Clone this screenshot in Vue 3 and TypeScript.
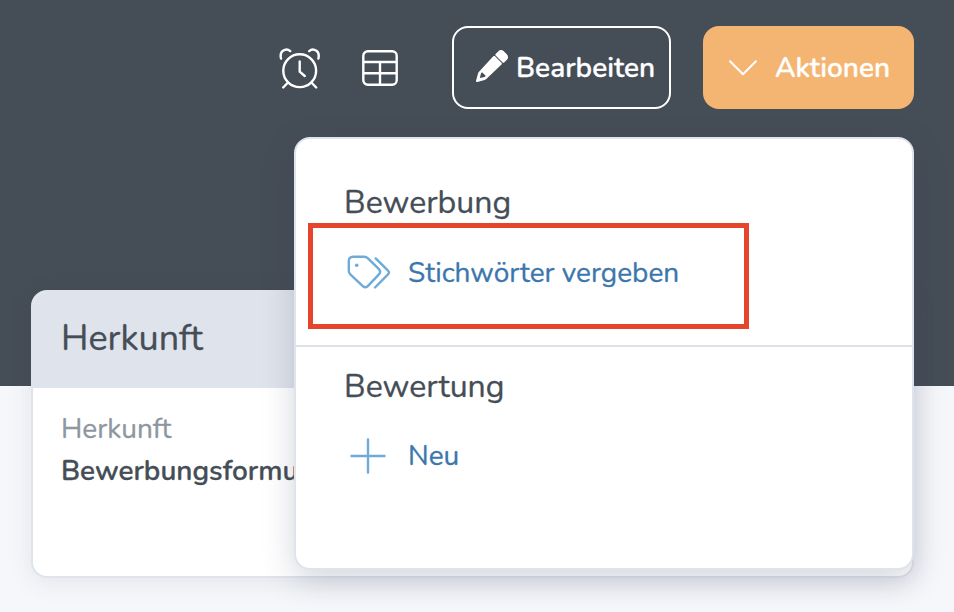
<script setup lang="ts">
import { ref } from 'vue'

interface MenuEntry {
  label: string
  icon: 'tags' | 'plus'
  highlighted: boolean
}
interface MenuSection {
  title: string
  entries: MenuEntry[]
}

const open = ref(true)
const sections: MenuSection[] = [
  { title: 'Bewerbung', entries: [{ label: 'Stichwörter vergeben', icon: 'tags', highlighted: true }] },
  { title: 'Bewertung', entries: [{ label: 'Neu', icon: 'plus', highlighted: false }] },
]
</script>

<template>
  <div class="page">
    <header class="hero">
      <div class="toolbar">
        <button class="icon-button clock" type="button" aria-label="Erinnerung">
          <svg width="42" height="44" viewBox="0 0 42 44" fill="none" stroke="#fff" stroke-width="2.4" stroke-linecap="round" stroke-linejoin="round">
            <circle cx="20.7" cy="23.7" r="16.4" />
            <path d="M20.7 14.5v10.2l5 4.3M9 35.5l-4.8 5M32.4 35.5l4.8 5M2 11.6C1.2 8 1.8 5.3 4 3.8c2.5-1.7 5.2-1.5 7.2.3M39.4 11.6c.8-3.6.2-6.3-2-7.8-2.5-1.7-5.2-1.5-7.2.3" />
          </svg>
        </button>
        <button class="icon-button" type="button" aria-label="Tabelle">
          <svg width="36" height="36" viewBox="0 0 36 36" fill="none" stroke="#fff" stroke-width="2.4">
            <rect x="1.3" y="1.3" width="33.4" height="33.4" rx="4.5" />
            <path d="M1.3 12h33.4M1.3 23.2h33.4M18 12v22.7" />
          </svg>
        </button>
        <button class="button outline" type="button">
          <svg class="pencil" width="32" height="32" viewBox="0 0 32 32" fill="#fff">
            <path fill-rule="evenodd" d="M17.3 6.3c.5-.5 1.2-.5 1.7 0l6.5 6.5c.5.5.5 1.2 0 1.7L10.3 29.1c-.5.5-1 .8-1.6.9L1.3 32c-.9.2-1.5-.4-1.3-1.3l2-7.3c.2-.7.5-1.2 1-1.7zM5 23.5l-1.2 4.6 4.7-1.2c1-.3 1.3-.9.7-1.6l-2.4-2.4c-.8-.7-1.5-.4-1.8.6z" />
            <path d="M19.6 4.1l2.6-2.7c1.5-1.7 4-1.7 5.6-.1l3 3c1.6 1.6 1.6 4 .1 5.5L28.2 12.4c-.5.5-1.1.5-1.6 0l-7-6.8c-.4-.5-.4-1 0-1.5z" />
          </svg>
          <span>Bearbeiten</span>
        </button>
        <div class="actions">
          <button class="button primary" type="button" @click="open = !open">
            <svg width="30" height="17" viewBox="0 0 30 17" fill="none" stroke="#fff" stroke-width="2" stroke-linecap="round" stroke-linejoin="round">
              <path d="M2 2.3l13 13 13-13" />
            </svg>
            <span>Aktionen</span>
          </button>
          <div v-if="open" class="menu">
            <section v-for="section in sections" :key="section.title" class="section">
              <h3 class="section-title">{{ section.title }}</h3>
              <a v-for="entry in section.entries" :key="entry.label" class="entry">
                <svg v-if="entry.icon === 'tags'" class="glyph" width="44" height="36" viewBox="0 0 44 36" fill="none" stroke="#6fabd9" stroke-width="2.4" stroke-linecap="round" stroke-linejoin="round">
                  <path d="M6 1.7h11c1.5 0 2.700.4 3.700 1.400l11 10.800c1.800 1.800 1.800 4 0 5.800L20.800 31.100c-1.500 1.500-3.500 1.500-5 0L3.300 19.300C2.300 18.400 1.800 17.500 1.800 16V5.900c0-2.500 1.700-4.200 4.200-4.200z" />
                  <path d="M28.700 3.400l12.300 12.200c1.300 1.300 1.300 2.500 0 3.800L28 32.500" />
                  <circle cx="9.700" cy="10.300" r="1.800" fill="#6fabd9" stroke="none" />
                </svg>
                <svg v-else class="glyph" width="44" height="36" viewBox="0 0 44 36" fill="none" stroke="#6fabd9" stroke-width="2.4" stroke-linecap="round">
                  <path d="M4.500 18h33M21 1.500v33" />
                </svg>
                <span>{{ entry.label }}</span>
                <span v-if="entry.highlighted" class="highlight"></span>
              </a>
            </section>
          </div>
        </div>
      </div>
    </header>
    <main class="card">
      <h2 class="card-header">Herkunft</h2>
      <dl class="card-body">
        <dt>Herkunft</dt>
        <dd>Bewerbungsformular</dd>
      </dl>
    </main>
  </div>
</template>

<style>
body {
  margin: 0;
  overflow: hidden;
}
</style>

<style scoped>
.page {
  height: 612px;
  overflow: hidden;
  background: #f6f7fa;
  color: #454d56;
  font-family: Nunito, Lato, "Noto Sans", sans-serif;
  font-size: 28px;
  -webkit-text-stroke: 0.3px currentColor;
}
.page * {
  box-sizing: border-box;
}
.hero {
  position: relative;
  height: 386px;
  padding: 26px 40px 0;
  background: #454d56;
}
.toolbar {
  display: flex;
  justify-content: flex-end;
  align-items: center;
  height: 83px;
}
button {
  margin: 0;
  padding: 0;
  border: 0;
  background: none;
  color: #fff;
  font: inherit;
}
svg {
  display: block;
  flex: none;
}
.icon-button {
  margin-right: 54px;
}
.clock {
  margin-right: 41px;
  padding-top: 3px;
}
.button {
  display: flex;
  align-items: center;
  height: 83px;
  border-radius: 16px;
  font-weight: 600;
  white-space: nowrap;
}
.outline {
  width: 219px;
  margin-right: 32px;
  padding-left: 22px;
  border: 2px solid #fff;
  gap: 8px;
}
.pencil {
  margin-bottom: 4px;
}
.primary {
  width: 211px;
  padding-left: 25px;
  background: #f4b573;
  gap: 17px;
}
.actions {
  position: relative;
  z-index: 2;
}
.menu {
  position: absolute;
  top: 111px;
  right: 0;
  width: 620px;
  height: 433px;
  border: 2px solid #dfe3eb;
  border-radius: 16px;
  background: #fff;
  box-shadow: 0 10px 32px rgba(60, 70, 100, 0.22);
}
.section {
  padding: 20px 48px 0;
}
.section:first-child {
  height: 208px;
  padding-top: 44px;
  border-bottom: 2px solid #e0e1e8;
}
.section-title {
  margin: 0;
  font-size: 32px;
  font-weight: 400;
  line-height: 40px;
}
.entry {
  position: relative;
  display: flex;
  align-items: center;
  height: 44px;
  margin-top: 28px;
  padding-left: 3px;
  color: #3b77ad;
  white-space: nowrap;
}
.section + .section .entry {
  margin-top: 27px;
}
.glyph {
  margin-right: 17px;
}
.highlight {
  position: absolute;
  top: -28px;
  left: -36px;
  width: 441px;
  height: 106px;
  border: 5px solid #e5452b;
}
.card {
  position: relative;
  width: 883px;
  height: 288px;
  margin: -96px 0 0 31px;
  overflow: hidden;
  border: 2px solid #dfe3eb;
  border-radius: 16px;
  background: #fff;
  box-shadow: 0 4px 24px rgba(60, 70, 100, 0.1);
}
.card-header {
  height: 96px;
  margin: 0;
  padding: 24px 28px;
  background: #dfe3eb;
  font-size: 36px;
  font-weight: 400;
  line-height: 46px;
}
.card-body {
  margin: 0;
  padding: 20px 28px;
  line-height: 42px;
}
dt {
  color: #8e969f;
}
dd {
  margin: 0;
  font-weight: 600;
}
</style>
